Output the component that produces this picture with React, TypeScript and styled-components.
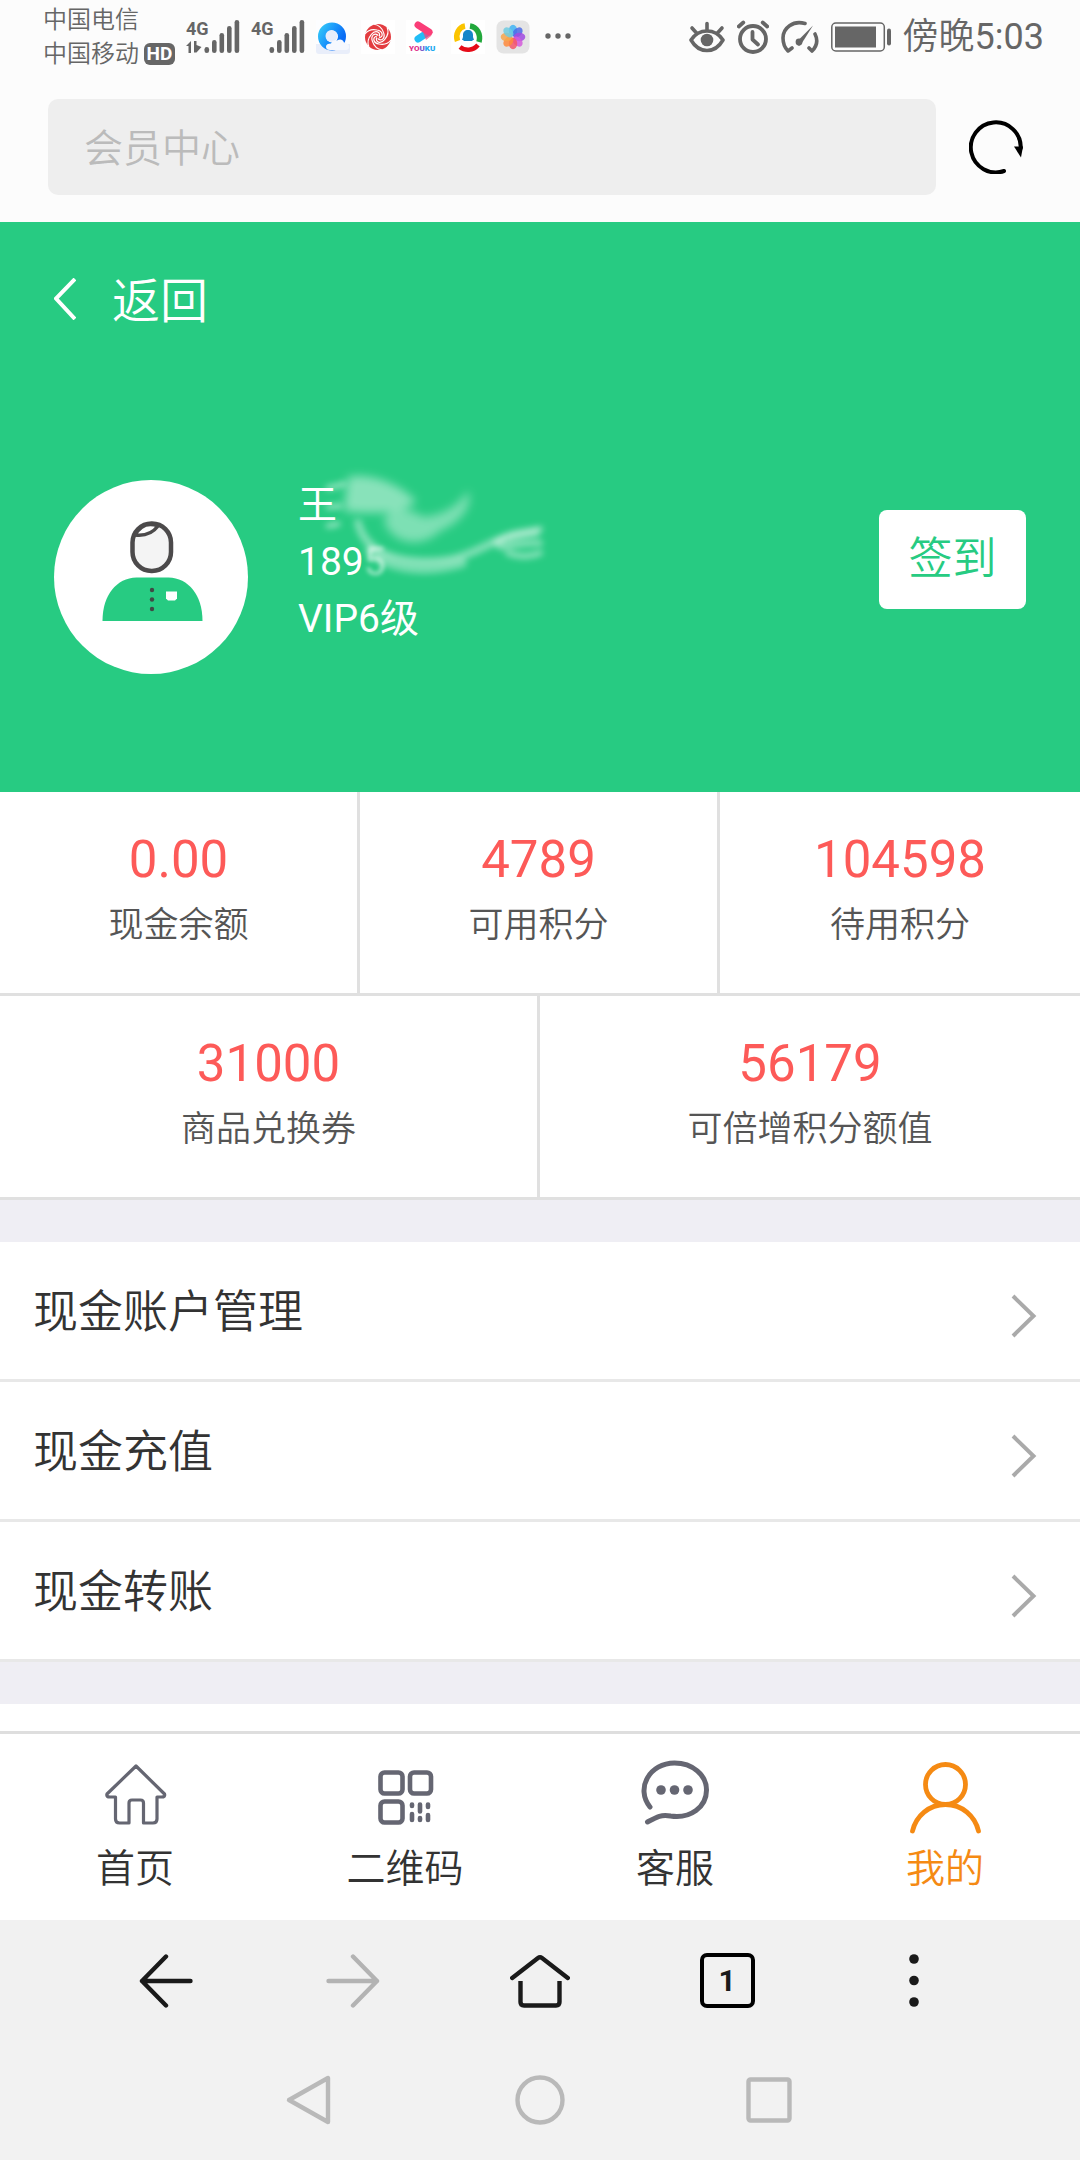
import React from "react";
import styled, { createGlobalStyle } from "styled-components";

const GREEN = "#27cb82";
const ORANGE = "#f58a13";

const Global = createGlobalStyle`
  *, *::before, *::after { box-sizing: border-box; }
  body {
    margin: 0;
    background: #efeef4;
    font-family: Roboto, "Noto Sans CJK SC", sans-serif;
    color: #333;
  }
  button, input { font: inherit; }
  svg { display: block; flex: none; }
`;

const Page = styled.div`
  display: flex;
  flex-direction: column;
  min-height: 100vh;
`;

/* ---------- status bar ---------- */

const StatusBar = styled.header`
  display: flex;
  align-items: center;
  justify-content: space-between;
  height: 74px;
  padding: 0 36px 0 43px;
  background: #fcfcfc;
  color: #666;
`;

const StatusGroup = styled.div<{ $gap: number }>`
  display: flex;
  align-items: center;
  gap: ${(p) => p.$gap}px;
`;

const Carriers = styled.div`
  width: 132px;
  font-size: 24px;
  font-weight: 350;
  line-height: 34px;
`;

const Carrier = styled.div`
  display: flex;
  align-items: center;
  gap: 5px;
  white-space: nowrap;
`;

const HdBadge = styled.span`
  width: 31px;
  border-radius: 6px;
  background: #666;
  color: #fff;
  font-size: 19px;
  font-weight: 700;
  line-height: 22px;
  text-align: center;
`;

const Clock = styled.time`
  font-size: 36px;
  line-height: 40px;
  font-weight: 350;
`;

const Digits = styled.span`
  font-weight: 400;
`;

/* ---------- browser address bar ---------- */

const AddressBar = styled.form`
  display: flex;
  align-items: center;
  gap: 33px;
  padding: 25px 57px 27px 48px;
  background: #fcfcfc;
`;

const AddressInput = styled.input`
  flex: 1;
  min-width: 0;
  height: 96px;
  padding: 4px 36px 0;
  border: 0;
  border-radius: 10px;
  background: #eee;
  font-size: 39px;
  font-weight: 350;
  color: #333;
  &::placeholder { color: #bbb; opacity: 1; }
`;

const IconButton = styled.button`
  display: flex;
  align-items: center;
  justify-content: center;
  padding: 0;
  border: 0;
  background: none;
  color: inherit;
`;

/* ---------- member header ---------- */

const Hero = styled.section`
  padding: 47px 54px 118px;
  background: ${GREEN};
  color: #fff;
`;

const BackLink = styled.a`
  display: inline-flex;
  align-items: center;
  gap: 36px;
  color: inherit;
  font-size: 48px;
  font-weight: 350;
  line-height: 66px;
  text-decoration: none;
  & > svg { margin-bottom: 6px; }
`;

const Profile = styled.div`
  display: flex;
  align-items: flex-start;
  margin-top: 142px;
`;

const Avatar = styled.div`
  margin-top: 3px;
  border-radius: 50%;
  background: #fff;
`;

const Identity = styled.div`
  position: relative;
  flex: 1;
  margin-left: 50px;
  font-size: 39px;
  line-height: 57px;
`;

const Faded = styled.span`
  opacity: 0.6;
  filter: blur(2px);
`;

const Smudge = styled.svg`
  position: absolute;
  left: 0;
  top: -16px;
`;

const SignIn = styled.button`
  margin-top: 33px;
  width: 147px;
  height: 99px;
  padding: 0 0 10px;
  border: 0;
  border-radius: 8px;
  background: #fff;
  color: ${GREEN};
  font-size: 44px;
  font-weight: 350;
`;

/* ---------- balances ---------- */

const StatRow = styled.dl`
  display: grid;
  grid-auto-flow: column;
  grid-auto-columns: minmax(0, 1fr);
  margin: 0;
  border-bottom: 3px solid #e0e0e0;
  background: #fff;
`;

const Stat = styled.div`
  display: flex;
  flex-direction: column-reverse;
  gap: 15px;
  padding: 38px 0 46px;
  text-align: center;
  border-right: 3px solid #e0e0e0;
  &:last-child { border-right: 0; }
`;

const StatLabel = styled.dt`
  font-size: 35px;
  font-weight: 350;
  line-height: 42px;
  color: #555;
`;

const StatValue = styled.dd`
  margin: 0;
  font-size: 51px;
  line-height: 60px;
  color: #fd5a58;
`;

/* ---------- menu ---------- */

const Menu = styled.nav`
  margin: 42px 0;
  background: #fff;
`;

const MenuRow = styled.a`
  display: flex;
  align-items: center;
  justify-content: space-between;
  height: 140px;
  padding: 0 42px 4px 33px;
  border-bottom: 3px solid #e8e8e8;
  color: #333;
  font-size: 45px;
  font-weight: 350;
  text-decoration: none;
  & > svg { margin-top: 14px; }
`;

const NextSection = styled.div`
  flex: 1;
  background: #fff;
`;

const TabBar = styled.nav`
  display: flex;
  height: 189px;
  border-top: 3px solid #dedede;
  background: #fff;
`;

const Tab = styled.a<{ $active?: boolean }>`
  flex: 1;
  display: flex;
  flex-direction: column;
  align-items: center;
  padding-top: 24px;
  gap: 10px;
  font-size: 39px;
  font-weight: 350;
  line-height: 50px;
  text-decoration: none;
  color: ${(p) => (p.$active ? ORANGE : "#333")};
`;

/* ---------- browser and system buttons ---------- */

const BrowserBar = styled.nav`
  display: flex;
  height: 120px;
  padding: 1px 72px 0;
  background: #f1f1f1;
  color: #1a1a1a;
  & > button { flex: 1; }
`;

const TabCount = styled.span`
  width: 55px;
  height: 55px;
  border: 4px solid #000;
  border-radius: 7px;
  font-size: 30px;
  font-weight: 700;
  line-height: 47px;
  text-align: center;
`;

const SystemBar = styled.nav`
  display: flex;
  height: 120px;
  padding: 0 196px;
  background: #f2f2f2;
  color: #b9b9b9;
  & > button { flex: 1; }
`;

/* ---------- drawings ---------- */

const Signal = ({ data }: { data?: boolean }) => (
  <svg width="54" height="36" viewBox="0 0 54 36" fill="#666">
    <text x="0" y="16" fontSize="18" fontWeight="700" fontFamily="Roboto">4G</text>
    {data && <path d="M0 27l5-5v12h-2.500v-7zM8 22h2.500v4l5 2-5 5.500H8z" />}
    <rect x="18.500" y="28" width="4.600" height="6" rx="2.300" />
    <rect x="26" y="21" width="4.600" height="13" rx="2.300" />
    <rect x="33.500" y="14" width="4.600" height="20" rx="2.300" />
    <rect x="41" y="7" width="4.600" height="27" rx="2.300" />
    <rect x="48.600" y="1" width="4.600" height="33" rx="2.300" />
  </svg>
);

const CloudBrowser = () => (
  <svg width="34" height="34" viewBox="0 0 34 34">
    <defs>
      <linearGradient id="ring" x1="0" y1="0" x2="1" y2="0.6">
        <stop offset="0" stopColor="#2fc0f8" />
        <stop offset="0.5" stopColor="#1a95fb" />
        <stop offset="1" stopColor="#0a6cf5" />
      </linearGradient>
    </defs>
    <rect width="34" height="34" rx="3" fill="#e9eefa" />
    <path d="M0 0h34v24H0z" fill="#fcfdff" />
    <circle cx="16" cy="16.500" r="10" fill="#fff" stroke="url(#ring)" strokeWidth="8" />
    <circle cx="15.500" cy="16" r="6" fill="#e8edfb" />
    <path d="M14 30c-3 0-4-1.500-4-3.500s2-3 5-3c1-3 4-4 6-3 3-2 6-1 7 2 3 .5 5 2 5 4.500s-2 3-5 3z" fill="#f6f8fe" />
  </svg>
);

const Swirl = () => (
  <svg width="34" height="34" viewBox="0 0 34 34">
    <rect width="34" height="34" fill="#fff" />
    <circle cx="17" cy="17" r="13" fill="#e33c40" />
    {[0, 60, 120, 180, 240, 300].map((a) => (
      <path
        key={a}
        d="M18 18C23 17 22 11 16 10 11 9 7 10 4 14"
        transform={`rotate(${a} 17 17)`}
        fill="none"
        stroke="#fff"
        strokeWidth="1.200"
      />
    ))}
  </svg>
);

const Youku = () => (
  <svg width="34" height="34" viewBox="0 0 34 34">
    <rect width="34" height="34" fill="#fff" />
    <path d="M12 19l9-6" stroke="#22bdf6" strokeWidth="7" strokeLinecap="round" />
    <path d="M12 5l11 7" stroke="#fa3e78" strokeWidth="7" strokeLinecap="round" />
    <path d="M17 12l10 0-2 4-5 4z" fill="#fa3e78" opacity="0.700" />
    <text x="3" y="31" fontSize="8" fontWeight="900" fontFamily="Roboto">
      <tspan fill="#e0338b">YO</tspan>
      <tspan fill="#7a5bc9">U</tspan>
      <tspan fill="#22a9f0">KU</tspan>
    </text>
  </svg>
);

const TriRing = () => (
  <svg width="34" height="34" viewBox="0 0 34 34" fill="none" strokeWidth="4.500">
    <rect width="34" height="34" fill="#fff" />
    <path d="M6.500 21C4 14 8 7 14 6" stroke="#fbc400" strokeWidth="5.500" />
    <path d="M19 6c7 1 11 8 9 16" stroke="#22a83c" strokeWidth="5.500" />
    <path d="M27 25c-5 6-13 6-18 2" stroke="#e60c18" />
    <path d="M17 10c3 0 5 2 5 5v2l1 3h-2l1 1H12l1-1h-2l1-3v-2c0-3 2-5 5-5z" fill="#1686c8" />
  </svg>
);

const Gallery = () => (
  <svg width="34" height="34" viewBox="0 0 34 34">
    <rect x="0.500" y="0.500" width="33" height="33" rx="7" fill="#e4e4e4" />
    {["#3fb4f4", "#4b6be8", "#a04be0", "#d45bdb", "#f4576a", "#ff8a3c", "#f6a64d", "#6fcbe0"].map((c, i) => (
      <ellipse key={c} cx="17" cy="10.500" rx="4.200" ry="5.800" fill={c} opacity="0.850" transform={`rotate(${i * 45} 17 17)`} />
    ))}
  </svg>
);

const More = () => (
  <svg width="34" height="34" viewBox="0 0 34 34" fill="#666">
    <circle cx="7" cy="16" r="2.700" />
    <circle cx="17" cy="16" r="2.700" />
    <circle cx="27" cy="16" r="2.700" />
  </svg>
);

const Eye = () => (
  <svg width="36" height="34" viewBox="0 0 36 34" fill="none" stroke="#666" strokeWidth="3.600" strokeLinecap="round">
    <path d="M2 20C10 8 26 8 34 20 26 34 10 34 2 20z" strokeLinejoin="round" />
    <circle cx="18" cy="20" r="6.300" fill="#666" stroke="none" />
    <path d="M18 3.500v6M3 8l4.500 5M33 8l-4.500 5" />
  </svg>
);

const Alarm = () => (
  <svg width="32" height="34" viewBox="0 0 32 34" fill="none" stroke="#666" strokeWidth="3.800" strokeLinecap="round">
    <circle cx="16" cy="19" r="13" />
    <path d="M1.800 6.500l4.500-4M30.200 6.500l-4.500-4" />
    <path d="M15.500 12v7.500l5.500 5" strokeLinejoin="round" />
  </svg>
);

const Gauge = () => (
  <svg width="38" height="34" viewBox="0 0 38 34" fill="none" stroke="#666" strokeWidth="3.600" strokeLinecap="round">
    <path d="M24 3.500C12 0 2 8 2 18c0 6 2 10 5 13l4-3" strokeLinejoin="round" />
    <path d="M34 14c3 6 2 12-3 17l-3-3" strokeLinejoin="round" />
    <path d="M32 5.500L20 24.500a2.500 2.500 0 1 1-4-3z" fill="#666" stroke="none" />
    <circle cx="18" cy="22" r="3.400" fill="#666" stroke="none" />
  </svg>
);

const Battery = () => (
  <svg width="60" height="30" viewBox="0 0 60 30" fill="#666">
    <rect x="0.800" y="1" width="52.500" height="28" rx="4" fill="none" stroke="#666" strokeWidth="1.500" />
    <rect x="4" y="4.500" width="41" height="21" />
    <rect x="56" y="6.500" width="4" height="17" rx="2" />
  </svg>
);

const Refresh = () => (
  <svg width="54" height="54" viewBox="0 0 54 54">
    <path d="M51.800 28A25 25 0 1 0 35 51" fill="none" stroke="#000" strokeWidth="4" strokeLinecap="round" />
    <path d="M45 26.500h9l-2 11z" />
  </svg>
);

const BackChevron = () => (
  <svg width="22" height="42" viewBox="0 0 22 42" fill="none" stroke="#fff" strokeWidth="4">
    <path d="M21 1L2 20.500 21 41" />
  </svg>
);

const Person = () => (
  <svg width="194" height="194" viewBox="0 0 194 194">
    <rect x="78.500" y="43.500" width="38.500" height="47.500" rx="19" fill="#f4f4f4" stroke="#4c4a4b" strokeWidth="4.500" />
    <path d="M81 55c8 1 17-1 23-9-10-4-18 0-23 9z" fill="#fff" stroke="#4c4a4b" strokeWidth="3.500" />
    <path d="M48.500 141c0-26 14-43 34-43.500h32c20 .5 34 17.500 34 43.500z" fill={GREEN} />
    <g fill="#3f4a45">
      <circle cx="98" cy="110" r="2.200" />
      <circle cx="98" cy="119.500" r="2.200" />
      <circle cx="98" cy="129" r="2.200" />
    </g>
    <path d="M112 111.500h11v7l-2 2h-7l-2-2z" fill="#fff" />
  </svg>
);

const SmudgeArt = () => (
  <Smudge width="260" height="140" viewBox="0 0 260 140" fill="none" aria-hidden="true">
    <defs>
      <filter id="soft" x="-30%" y="-30%" width="160%" height="160%"><feGaussianBlur stdDeviation="5" /></filter>
      <filter id="fine" x="-20%" y="-20%" width="140%" height="140%"><feGaussianBlur stdDeviation="3" /></filter>
    </defs>
    <g filter="url(#soft)" fill="#fff">
      <path d="M50 16c22-4 50 6 68 24-10 12-42 14-72 10z" opacity="0.450" />
      <path d="M86 60c6-16 22-14 40-4 16-2 32-8 44-26 6 14-8 32-28 40-18 18-48 14-56-10z" opacity="0.400" />
    </g>
    <g filter="url(#fine)" stroke="#fff" strokeLinecap="round">
      <path d="M30 27l16-4M30 46l12-1M30 65l10-2" strokeWidth="5" opacity="0.500" />
      <path d="M60 62c6 24 26 36 60 38 36 2 54-8 78-20 12-4 26-6 40-8" strokeWidth="8" opacity="0.400" />
      <path d="M72 90c20 20 60 22 92 12" strokeWidth="10" opacity="0.350" />
      <path d="M198 82c10-10 22-10 44-14M202 86c14-2 24-4 40-4M210 92c10 4 22 4 32 0" strokeWidth="6" opacity="0.450" />
    </g>
  </Smudge>
);

const Chevron = () => (
  <svg width="27" height="44" viewBox="0 0 27 44" fill="none" stroke="#aaa" strokeWidth="4">
    <path d="M2 2l20.500 20L2 42" />
  </svg>
);

const slate = "#656672";

const HomeTab = () => (
  <svg width="76" height="76" viewBox="0 0 76 76" fill="none" stroke={slate} strokeWidth="3.200" strokeLinejoin="round">
    <path d="M39 8l28.500 28q1 3-3 3h-4.500v22q0 4-4 4H46.500V45q0-3-3-3H35q-3 0-3 3v20H22.500q-4 0-4-4V39H13q-4 0-3-3z" />
  </svg>
);

const QrTab = () => (
  <svg width="76" height="76" viewBox="0 0 76 76" fill="none" stroke={slate} strokeWidth="4.600" strokeLinecap="round">
    <rect x="13.500" y="14.500" width="22" height="21" rx="4" />
    <rect x="43" y="14.500" width="21" height="21" rx="4" />
    <rect x="13.500" y="43.500" width="22" height="21" rx="4" />
    <path d="M45 46.500v1.500M45 56v6M53 46.500v7M53 60v2M61 46.500v2.500M61 57v5" />
  </svg>
);

const ChatTab = () => (
  <svg width="76" height="76" viewBox="0 0 76 76" fill="none" stroke={slate} strokeWidth="5" strokeLinecap="round">
    <path d="M13 49C-2 30 13 5 37.500 5c18 0 32 12 32 27 0 17-16 29-36 26-9-2-14 1-23 6" />
    <g fill={slate} stroke="none">
      <circle cx="24" cy="32" r="4.800" />
      <circle cx="37.500" cy="32" r="4.800" />
      <circle cx="51" cy="32" r="4.800" />
    </g>
  </svg>
);

const MineTab = () => (
  <svg width="76" height="76" viewBox="0 0 76 76" fill="none" stroke={ORANGE} strokeWidth="4.800" strokeLinecap="round">
    <circle cx="38.500" cy="26.500" r="20" />
    <path d="M5.500 73C9 58 22 46.500 38.500 46.500S68 58 71.500 73" />
  </svg>
);

const Arrow = ({ forward }: { forward?: boolean }) => (
  <svg
    width="54" height="54" viewBox="0 0 54 54" fill="none"
    stroke={forward ? "#b3b3b3" : "#1a1a1a"} strokeWidth="4.400" strokeLinecap="round" strokeLinejoin="round"
  >
    <path d={forward ? "M27 2.500L51 27 27 51.500M51 27H2.500" : "M27 2.500L3 27l24 24.500M3 27h48.500"} />
  </svg>
);

const HomeOutline = () => (
  <svg width="60" height="54" viewBox="0 0 60 54" fill="none" stroke="#1a1a1a" strokeWidth="4.400" strokeLinecap="round" strokeLinejoin="round">
    <path d="M2.200 24L28 4q2-1.500 4 0l25.800 20" />
    <path d="M10.500 27v21q0 3.500 3.500 3.500h32q3.500 0 3.500-3.500V27" strokeLinecap="butt" />
  </svg>
);

const Dots = () => (
  <svg width="54" height="54" viewBox="0 0 54 54" fill="#1a1a1a">
    <circle cx="27" cy="5" r="4.800" />
    <circle cx="27" cy="26.500" r="4.800" />
    <circle cx="27" cy="48" r="4.800" />
  </svg>
);

const sys = { width: 50, height: 50, viewBox: "0 0 50 50", fill: "none", stroke: "#b9b9b9", strokeWidth: 4.4 };

/* ---------- data ---------- */

const stats = [
  [
    { value: "0.00", label: "现金余额" },
    { value: "4789", label: "可用积分" },
    { value: "104598", label: "待用积分" },
  ],
  [
    { value: "31000", label: "商品兑换券" },
    { value: "56179", label: "可倍增积分额值" },
  ],
];

const menu = ["现金账户管理", "现金充值", "现金转账"];

const tabs = [
  { label: "首页", Icon: HomeTab },
  { label: "二维码", Icon: QrTab },
  { label: "客服", Icon: ChatTab },
  { label: "我的", Icon: MineTab, active: true },
];

export default function App() {
  return (
    <Page>
      <Global />
      <StatusBar>
        <StatusGroup $gap={11}>
          <Carriers>
            <Carrier>中国电信</Carrier>
            <Carrier>中国移动<HdBadge>HD</HdBadge></Carrier>
          </Carriers>
          <Signal data />
          <Signal />
          <CloudBrowser />
          <Swirl />
          <Youku />
          <TriRing />
          <Gallery />
          <More />
        </StatusGroup>
        <StatusGroup $gap={12}>
          <Eye />
          <Alarm />
          <Gauge />
          <Battery />
          <Clock>傍晚<Digits>5:03</Digits></Clock>
        </StatusGroup>
      </StatusBar>

      <AddressBar onSubmit={(e) => e.preventDefault()}>
        <AddressInput type="text" placeholder="会员中心" aria-label="会员中心" />
        <IconButton type="button" aria-label="刷新"><Refresh /></IconButton>
      </AddressBar>

      <Hero>
        <BackLink href="#"><BackChevron />返回</BackLink>
        <Profile>
          <Avatar><Person /></Avatar>
          <Identity>
            <div>王</div>
            <div>189<Faded>5</Faded></div>
            <div>VIP6级</div>
            <SmudgeArt />
          </Identity>
          <SignIn type="button">签到</SignIn>
        </Profile>
      </Hero>

      {stats.map((row, i) => (
        <StatRow key={i}>
          {row.map((s) => (
            <Stat key={s.label}>
              <StatLabel>{s.label}</StatLabel>
              <StatValue>{s.value}</StatValue>
            </Stat>
          ))}
        </StatRow>
      ))}

      <Menu>
        {menu.map((label) => (
          <MenuRow key={label} href="#">{label}<Chevron /></MenuRow>
        ))}
      </Menu>
      <NextSection />

      <TabBar>
        {tabs.map(({ label, Icon, active }) => (
          <Tab key={label} href="#" $active={active}><Icon />{label}</Tab>
        ))}
      </TabBar>

      <BrowserBar>
        <IconButton type="button" aria-label="后退"><Arrow /></IconButton>
        <IconButton type="button" aria-label="前进"><Arrow forward /></IconButton>
        <IconButton type="button" aria-label="主页"><HomeOutline /></IconButton>
        <IconButton type="button" aria-label="标签页"><TabCount>1</TabCount></IconButton>
        <IconButton type="button" aria-label="菜单"><Dots /></IconButton>
      </BrowserBar>
      <SystemBar>
        <IconButton type="button" aria-label="返回键">
          <svg {...sys} strokeLinejoin="round"><path d="M3 25L42 3v44z" /></svg>
        </IconButton>
        <IconButton type="button" aria-label="主屏幕键">
          <svg {...sys}><circle cx="25" cy="25" r="22.500" /></svg>
        </IconButton>
        <IconButton type="button" aria-label="多任务键">
          <svg {...sys}><rect x="4.500" y="4.500" width="41" height="41" rx="2" /></svg>
        </IconButton>
      </SystemBar>
    </Page>
  );
}
